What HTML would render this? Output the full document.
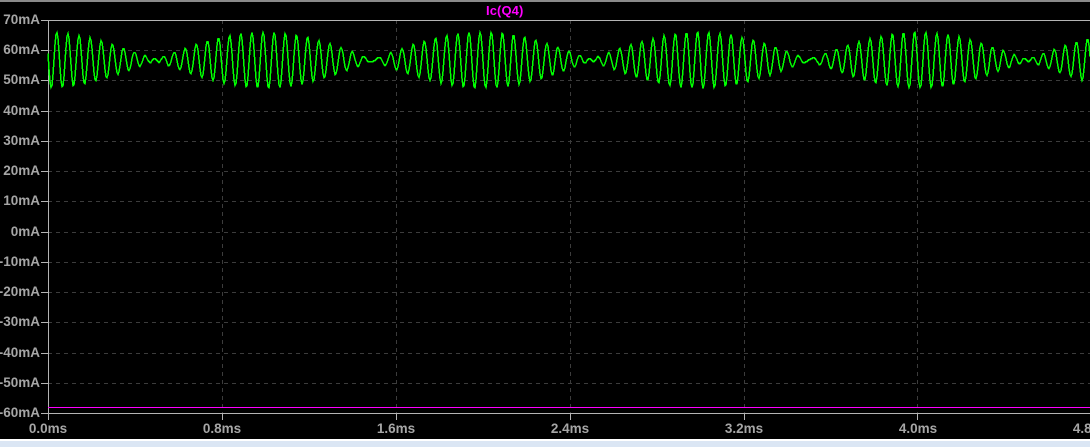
<!DOCTYPE html>
<html><head><meta charset="utf-8">
<style>
html,body{margin:0;padding:0;background:#000;}
#c{position:relative;width:1090px;height:447px;overflow:hidden;background:#000;font-family:"Liberation Sans",sans-serif;font-weight:bold;}
.y,.x,.t{position:absolute;color:#a6a6a6;font-size:13.5px;line-height:14px;letter-spacing:0;white-space:nowrap;}
.y{right:1050px;text-align:right;}
.x{width:80px;text-align:center;top:422px;}
.t{left:486px;top:4px;color:#f0f;font-size:13px;letter-spacing:.1px;}
svg{position:absolute;left:0;top:0;}
</style></head><body><div id="c">
<svg width="1090" height="447" viewBox="0 0 1090 447" shape-rendering="crispEdges">
<rect x="0" y="0" width="1090" height="2" fill="#8a8a8a"/>
<rect x="0" y="439" width="1090" height="2" fill="#fff"/>
<rect x="0" y="441" width="1090" height="6" fill="#dbe6f4"/>
<g stroke="#3c3c3c" stroke-width="1" stroke-dasharray="4 4" fill="none">
<path d="M48 50.5H1090M48 80.5H1090M48 111.5H1090M48 141.5H1090M48 171.5H1090M48 201.5H1090M48 232.5H1090M48 262.5H1090M48 292.5H1090M48 322.5H1090M48 353.5H1090M48 383.5H1090"/>
<path d="M222.5 20V413M396.5 20V413M570.5 20V413M744.5 20V413M917.5 20V413"/>
</g>
<g stroke="#b4b4b4" stroke-width="1" fill="none">
<path d="M41 20.5H1090M48.5 20V420M41 413.5H1090"/>
<path d="M41 50.5H48M41 80.5H48M41 111.5H48M41 141.5H48M41 171.5H48M41 201.5H48M41 232.5H48M41 262.5H48M41 292.5H48M41 322.5H48M41 353.5H48M41 383.5H48"/>
<path d="M222.5 413V420M396.5 413V420M570.5 413V420M744.5 413V420M917.5 413V420"/>
</g>
<rect x="48" y="407" width="1042" height="1" fill="#f0f"/>
<path id="w" fill="none" stroke="#00ff00" stroke-width="1.5" d=""/>
</svg>
<div class="t">Ic(Q4)</div>
<div class="y" style="top:13px">70mA</div>
<div class="y" style="top:43px">60mA</div>
<div class="y" style="top:73px">50mA</div>
<div class="y" style="top:104px">40mA</div>
<div class="y" style="top:134px">30mA</div>
<div class="y" style="top:164px">20mA</div>
<div class="y" style="top:194px">10mA</div>
<div class="y" style="top:225px">0mA</div>
<div class="y" style="top:255px">-10mA</div>
<div class="y" style="top:285px">-20mA</div>
<div class="y" style="top:315px">-30mA</div>
<div class="y" style="top:346px">-40mA</div>
<div class="y" style="top:376px">-50mA</div>
<div class="y" style="top:406px">-60mA</div>
<div class="x" style="left:8px">0.0ms</div>
<div class="x" style="left:182px">0.8ms</div>
<div class="x" style="left:356px">1.6ms</div>
<div class="x" style="left:530px">2.4ms</div>
<div class="x" style="left:704px">3.2ms</div>
<div class="x" style="left:878px">4.0ms</div>
<div class="x" style="left:1052px">4.8ms</div>
</div>
<script>
(function(){
var d="",P=11.141,wc=2*Math.PI/P;
for(var x=48;x<=1090;x+=1){
  var e=Math.sin(Math.PI*(x-155)/218);
  var ph=wc*(x-162.7);
  var v=28*e*Math.cos(ph)+1.5*Math.sin(ph);
  var y=Math.round(59.6-v)+0.5;
  d+=(x==48?"M":"L")+x+" "+y;
}
document.getElementById("w").setAttribute("d",d);
})();
</script>
</body></html>
